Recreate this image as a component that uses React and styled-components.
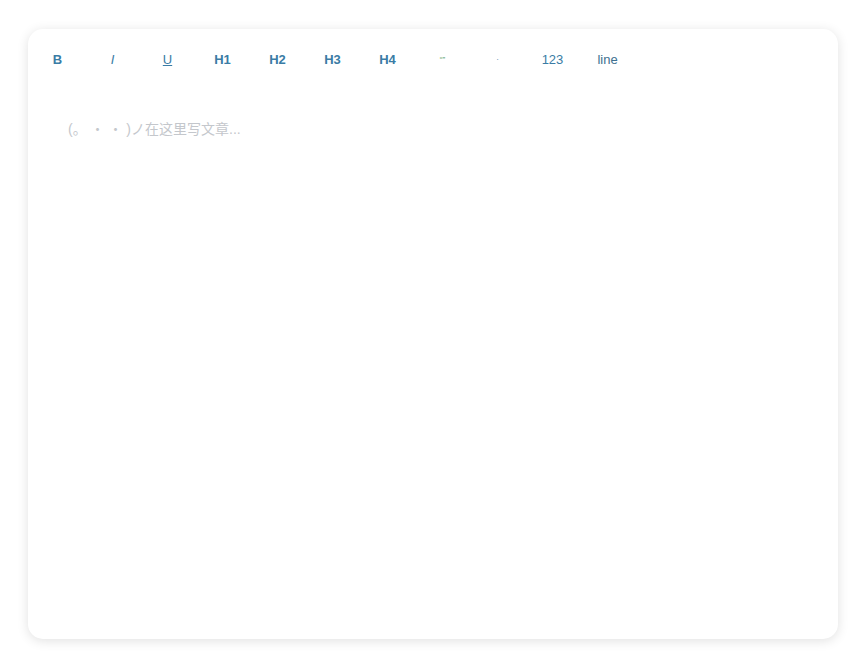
import React from "react"
import styled, { createGlobalStyle } from "styled-components"

const Global = createGlobalStyle`
  html, body {
    margin: 0;
    padding: 0;
    background: #fff;
    font-family: "Liberation Sans", Arial, sans-serif;
  }
`

const Page = styled.div`
  padding: 29px 29px 30px 28px;
`

const Card = styled.div`
  width: 810px;
  height: 610px;
  background: #fff;
  border-radius: 15px;
  box-shadow: 0 2px 12px rgba(0, 0, 0, 0.12);
  display: flex;
  flex-direction: column;
`

const Toolbar = styled.div`
  display: flex;
  padding: 15px 2px;
`

const Tool = styled.button`
  width: 55px;
  height: 30px;
  border: none;
  background: transparent;
  padding: 0;
  display: flex;
  align-items: center;
  justify-content: center;
  font-family: "Liberation Sans", Arial, sans-serif;
  font-size: ${p => p.$size || 13}px;
  font-weight: ${p => (p.$bold ? 700 : 400)};
  font-style: ${p => (p.$italic ? "italic" : "normal")};
  text-decoration: ${p => (p.$underline ? "underline" : "none")};
  color: ${p => p.$color || "#3a7ca5"};
  cursor: pointer;
`

const Editor = styled.div`
  flex: 1;
  padding: 30px 40px;
`

const Placeholder = styled.div`
  font-family: "Liberation Sans", "Noto Sans CJK SC", sans-serif;
  font-size: 14px;
  line-height: 20px;
  color: #c4c7cc;
  white-space: pre;
`

const tools = [
  { label: "B", bold: true },
  { label: "I", italic: true },
  { label: "U", underline: true },
  { label: "H1", bold: true },
  { label: "H2", bold: true },
  { label: "H3", bold: true },
  { label: "H4", bold: true },
  { label: "“”", size: 8, color: "#4e9a5c" },
  { label: "·", size: 8 },
  { label: "123" },
  { label: "line", color: "#3d6f8f" },
]

export default function App() {
  return (
    <Page>
      <Global />
      <Card>
        <Toolbar>
          {tools.map(t => (
            <Tool
              key={t.label}
              $bold={t.bold}
              $italic={t.italic}
              $underline={t.underline}
              $size={t.size}
              $color={t.color}
            >
              {t.label}
            </Tool>
          ))}
        </Toolbar>
        <Editor>
          <Placeholder>(。 ・ ・ )ノ在这里写文章...</Placeholder>
        </Editor>
      </Card>
    </Page>
  )
}
